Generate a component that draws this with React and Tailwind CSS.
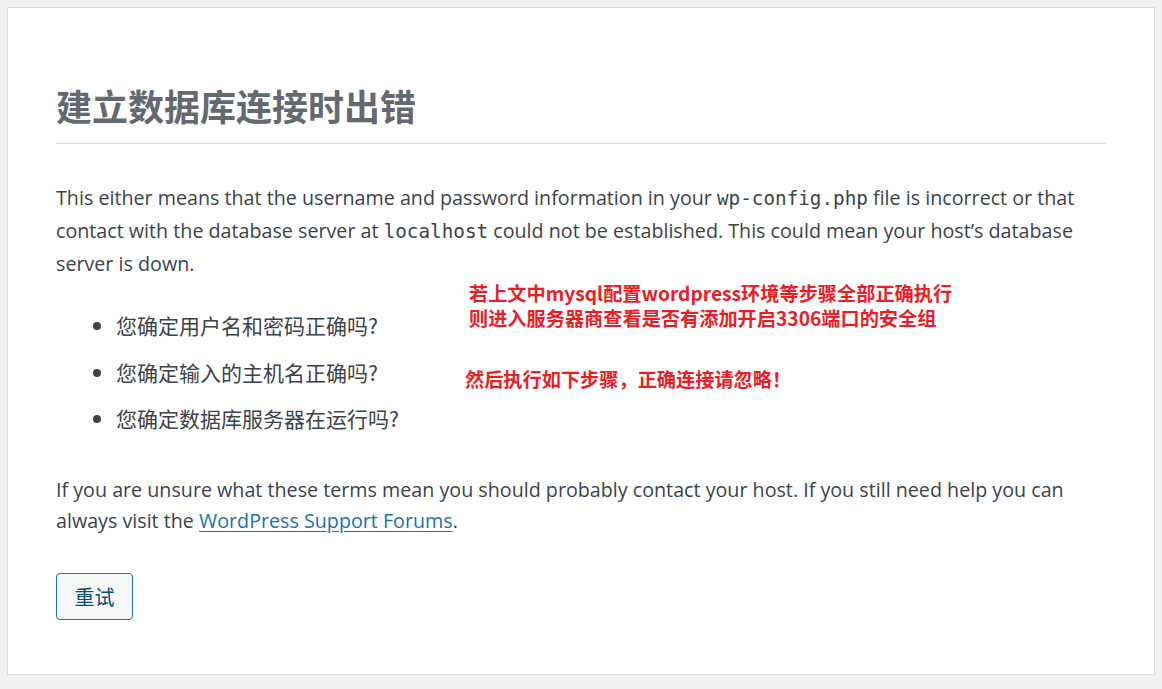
import React from "react";

const sans = "font-['Segoe_UI','Open_Sans','Noto_Sans_CJK_SC',sans-serif]";
const mono = "font-['DejaVu_Sans_Mono',monospace] text-[19.3px] leading-none";

const App = () => {
  return (
    <div className="min-h-[689px] bg-[#f0f0f1] pt-[7px] pb-[14px]">
      <div className={`relative mx-[7px] h-[668px] border border-[#dcdcde] bg-white px-[48px] pt-[76px] text-[19.7px] leading-[1.5] text-[#3c434a] ${sans}`}>
        <h1 className="border-b border-[#dcdcde] pb-[16px] text-[36px] font-bold leading-[1.2] text-[#646970] font-['Noto_Sans_CJK_SC',sans-serif]">
          建立数据库连接时出错
        </h1>

        <p className="mt-[37px] leading-[33px]">
          This either means that the username and password information in your{" "}
          <code className={mono}>wp-config.php</code> file is incorrect or that contact with the database server at{" "}
          <code className={mono}>localhost</code> could not be established. This could mean your host’s database
          server is down.
        </p>

        <ul className="mt-[30px] list-disc pl-[60px] text-[21px] leading-[30px] font-['Noto_Sans_CJK_SC',sans-serif]">
          <li className="mb-[16.5px]">您确定用户名和密码正确吗?</li>
          <li className="mb-[16.5px]">您确定输入的主机名正确吗?</li>
          <li className="mb-[16.5px]">您确定数据库服务器在运行吗?</li>
        </ul>

        <p className="mt-[41px] leading-[31px]">
          If you are unsure what these terms mean you should probably contact your host. If you still need help you can
          always visit the{" "}
          <a href="#" className="text-[#2271b1] underline underline-offset-[3px]">
            WordPress Support Forums
          </a>
          .
        </p>

        <button className="mt-[37px] h-[47px] w-[77px] rounded-[4px] border border-[#2271b1] bg-[#f6f7f7] text-[20px] text-[#0a4b78] font-['Noto_Sans_CJK_SC',sans-serif]">
          重试
        </button>

        <div className="absolute left-[461px] top-[273px] text-[19.2px] font-bold leading-[25px] text-[#ee1c25] font-['Noto_Sans_CJK_SC',sans-serif]">
          <p>若上文中mysql配置wordpress环境等步骤全部正确执行</p>
          <p>则进入服务器商查看是否有添加开启3306端口的安全组</p>
          <p className="mt-[36px] -ml-[4px]">然后执行如下步骤，正确连接请忽略！</p>
        </div>
      </div>
    </div>
  );
};

export default App;
